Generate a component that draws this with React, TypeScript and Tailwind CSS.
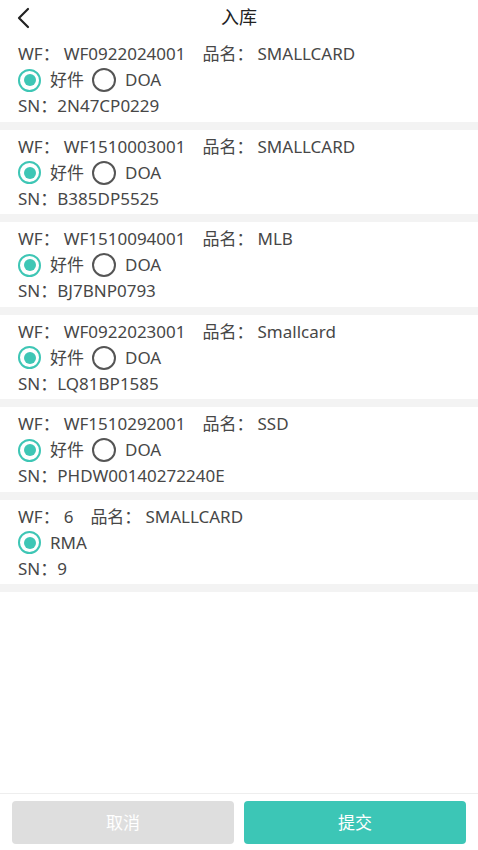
import React from "react"

type Item = {
	wf: string
	name: string
	sn: string
	rma?: boolean
}

const items: Item[] = [
	{ wf: "WF0922024001", name: "SMALLCARD", sn: "2N47CP0229" },
	{ wf: "WF1510003001", name: "SMALLCARD", sn: "B385DP5525" },
	{ wf: "WF1510094001", name: "MLB", sn: "BJ7BNP0793" },
	{ wf: "WF0922023001", name: "Smallcard", sn: "LQ81BP1585" },
	{ wf: "WF1510292001", name: "SSD", sn: "PHDW00140272240E" },
	{ wf: "6", name: "SMALLCARD", sn: "9", rma: true },
]

function Radio({ checked }: { checked: boolean }) {
	return checked ? (
		<span className="flex items-center justify-center w-[23px] h-[23px] rounded-full border-[2.5px] border-[#3ec6b5]">
			<span className="w-[12px] h-[12px] rounded-full bg-[#3ec6b5]" />
		</span>
	) : (
		<span className="w-[24px] h-[24px] rounded-full border-2 border-[#555]" />
	)
}

function Card({ item }: { item: Item }) {
	return (
		<div className="bg-white px-[18px] pt-[4px] h-[84.5px] text-[17px] leading-[26px] text-[#474747]">
			<div className="flex">
				<span>WF：</span>
				<span className="ml-[4px]">{item.wf}</span>
				<span className="ml-[17px]">品名：</span>
				<span className="ml-[4px]">{item.name}</span>
			</div>
			<div className="flex items-center h-[26px]">
				<Radio checked />
				{item.rma ? (
					<span className="ml-[9px]">RMA</span>
				) : (
					<>
						<span className="ml-[9px]">好件</span>
						<span className="ml-[8px] flex">
							<Radio checked={false} />
						</span>
						<span className="ml-[9px]">DOA</span>
					</>
				)}
			</div>
			<div className="flex">
				<span>SN：</span>
				<span>{item.sn}</span>
			</div>
		</div>
	)
}

export default function App() {
	return (
		<div
			className="w-[478px] h-[850px] bg-white flex flex-col"
			style={{ fontFamily: '"Noto Sans", "Noto Sans CJK SC", sans-serif' }}
		>
			<div className="relative h-[37px] flex items-center justify-center">
				<svg
					className="absolute left-[15px] top-[7px]"
					width="18"
					height="22"
					viewBox="0 0 18 22"
					fill="none"
					stroke="#222"
					strokeWidth="2.2"
					strokeLinecap="round"
					strokeLinejoin="round"
				>
					<path d="M13 2 L4 11 L13 20" />
				</svg>
				<span className="text-[18px] text-[#222] mt-[-3px]">入库</span>
			</div>
			<div className="flex-1 flex flex-col">
				{items.map((item) => (
					<div key={item.wf + item.sn}>
						<Card item={item} />
						<div className="h-[8px] bg-[#f3f3f3]" />
					</div>
				))}
			</div>
			<div className="border-t border-[#eeeeee] h-[57px] flex gap-[10px] px-[12px] pt-[7px]">
				<button className="flex-1 h-[43px] rounded-[4px] bg-[#dedede] text-white text-[17px]">
					取消
				</button>
				<button className="flex-1 h-[43px] rounded-[4px] bg-[#3cc6b6] text-white text-[17px]">
					提交
				</button>
			</div>
		</div>
	)
}
